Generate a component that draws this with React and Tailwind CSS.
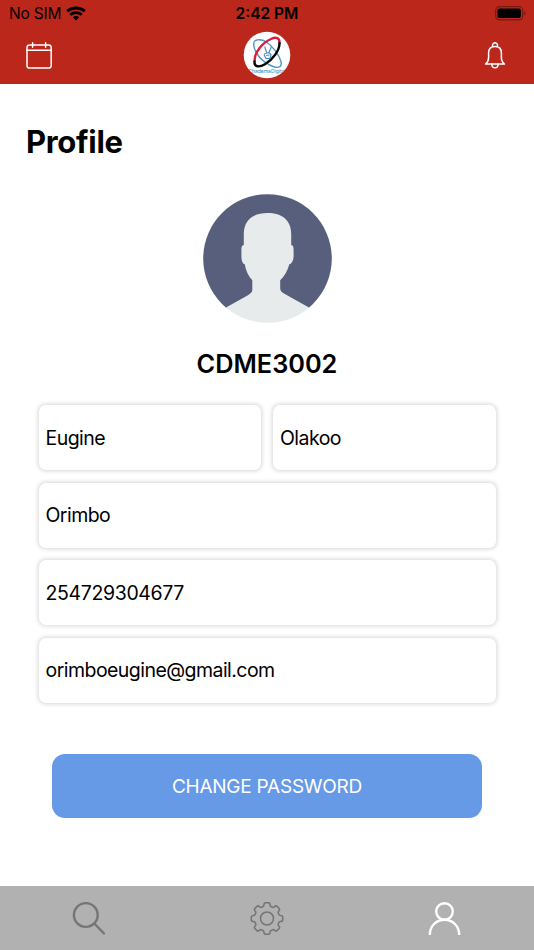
import { useState } from "react";

// Eight teeth, one every 45 degrees
const gearPath = (() => {
    const point = (x, y, angle) => {
        const px = x * Math.cos(angle) - y * Math.sin(angle);
        const py = x * Math.sin(angle) + y * Math.cos(angle);
        return `${px.toFixed(2)} ${py.toFixed(2)}`;
    };
    let d = "";
    for (let i = 0; i < 8; i++) {
        const a = (i * Math.PI) / 4;
        const p = (x, y) => point(x, y, a);
        d += `${i === 0 ? "M" : "L"}${p(-4.4, -11.7)} Q${p(-3.2, -12.1)} ${p(-3.1, -13.4)} Q${p(-3, -15.7)} ${p(-1.5, -15.7)} L${p(1.5, -15.7)} Q${p(3, -15.7)} ${p(3.1, -13.4)} Q${p(3.2, -12.1)} ${p(4.4, -11.7)} `;
    }
    return d + "Z";
})();

const WifiIcon = () => (
    <svg width="20" height="15" viewBox="0 0 20 15" className="-mt-px">
        <g fill="none" stroke="#000" strokeWidth="2.8">
            <path d="M1.2 5.3C6.1 .9 13.9 .9 18.8 5.3" />
            <path d="M4.3 8.7C7.5 5.9 12.5 5.9 15.7 8.7" />
        </g>
        <path d="M6.8 11.2C8.6 9.6 11.4 9.6 13.2 11.2L10 14.5Z" />
    </svg>
);

const BatteryIcon = () => (
    <svg width="32" height="15" viewBox="0 0 32 15" className="-mt-[2px]">
        <rect x=".7" y=".7" width="27" height="13.2" rx="3.8" fill="none" stroke="#761a12" strokeWidth="1.2" />
        <rect x="2.5" y="2.4" width="23.4" height="9.7" rx="2.2" />
        <path d="M29.2 5.2C31.2 5.8 31.2 8.8 29.2 9.4Z" fill="#761a12" />
    </svg>
);

const CalendarIcon = () => (
    <svg width="28" height="28" viewBox="0 0 28 28" fill="none" stroke="#fff" strokeWidth="1.5" strokeLinecap="round">
        <rect x="2" y="2.9" width="24.2" height="23.2" rx="2.6" />
        <path d="M2 8.2H26.2M7.6 .8V5.2M20.6 .8V5.2" />
    </svg>
);

const BellIcon = () => (
    <svg width="22" height="28" viewBox="0 0 22 28" fill="none" stroke="#fff" strokeWidth="1.5" strokeLinejoin="round" strokeLinecap="round">
        <path d="M9 4.6A2.4 2.4 0 1 1 13 4.6" />
        <path d="M1.5 22C3.6 20.5 4.6 18.5 4.6 15.5V11C4.6 7 7.1 4.5 11 4.5S17.4 7 17.4 11V15.5C17.4 18.5 18.4 20.5 20.5 22Z" />
        <path d="M7.8 22.2C8 26.9 14 26.9 14.2 22.2" />
    </svg>
);

const Logo = () => (
    <svg width="48" height="48" viewBox="0 0 48 48" className="-mt-px">
        <defs>
            <clipPath id="badge"><circle cx="24" cy="24" r="23.3" /></clipPath>
        </defs>
        <circle cx="24" cy="24" r="23.3" fill="#fff" />
        <g clipPath="url(#badge)" fill="none" strokeLinecap="round">
            <path d="M10.7 12.5C11 7.5 19 8 23.5 11C30 15.5 36 23.5 38 30.5C39 35 36.5 37.3 31.5 36C25 34.3 18 29 14.5 23.5C12 19.5 10.4 16 10.7 12.5Z" stroke="#4f98c8" strokeWidth="1.4" />
            <path d="M11.7 30C11 22 19.5 11.5 28 8C33 5.7 36.8 6.7 36.5 12" stroke="#d81e3d" strokeWidth="2.4" />
            <path d="M36.5 12C36.8 19.5 29.5 28.8 22 33.2C16 36.7 11 36.2 11.5 30.5" stroke="#080808" strokeWidth="2.4" />
            <path d="M21.8 16L23.5 21M28.4 15.5L26 21.5M21.5 23L25.5 21.5L28 23.5L27 27.5H23L21.2 24M23.5 24.5L26 24" stroke="#4c91bd" strokeWidth="1.2" strokeLinejoin="round" />
            <text x="24" y="41.7" textAnchor="middle" fontSize="5" fill="#2a83be" fontFamily="Inter, sans-serif">ChademaDigital</text>
        </g>
    </svg>
);

const Avatar = () => (
    <svg width="129" height="129" viewBox="0 0 129 129">
        <defs>
            <clipPath id="avatar"><circle cx="64.5" cy="64.5" r="64.3" /></clipPath>
        </defs>
        <g clipPath="url(#avatar)">
            <path d="M0 0H129V114H0Z" fill="#585f7c" />
            <path
                fill="#e7ebec"
                d="M64.5 19C50 19 40.8 26 40.8 40V51C38.7 51.5 38.4 53 38.4 56V62C38.4 66 39.5 70 41.8 70.3C42.8 77 45.5 82 49.3 86.3V96C49.3 98.5 47 100 44.5 101.4L23 113.5V129H106V113.5L84.5 101.4C80 99 77.2 98 77.2 94V86.3C81.5 82 84.5 77 86.3 70.3C88.8 70 90.6 66 90.6 62V56C90.6 53 90.2 51.5 88.2 51V40C88.2 26 79 19 64.5 19Z"
            />
        </g>
    </svg>
);

const SearchIcon = () => (
    <svg width="36" height="36" viewBox="0 0 36 36" fill="none" stroke="currentColor" strokeWidth="2.4" strokeLinecap="round">
        <circle cx="14.8" cy="15" r="11.9" />
        <path d="M23.3 23.5L33 33.5" />
    </svg>
);

const GearIcon = () => (
    <svg width="36" height="36" viewBox="-18 -18.5 36 36" fill="none" stroke="currentColor" strokeWidth="1.55" strokeLinejoin="round">
        <path d={gearPath} />
        <circle r="6.5" />
    </svg>
);

const PersonIcon = () => (
    <svg width="36" height="36" viewBox="0 0 36 36" fill="none" stroke="currentColor" strokeWidth="2.4">
        <circle cx="17.5" cy="11.5" r="8.3" />
        <path d="M2.8 35C2.8 26 9.3 19.8 17.5 19.8S32.2 26 32.2 35" />
    </svg>
);

const tabs = [
    { id: "search", icon: SearchIcon },
    { id: "settings", icon: GearIcon },
    { id: "profile", icon: PersonIcon },
];

const Field = ({ value, type = "text", wide }) => (
    <input
        type={type}
        defaultValue={value}
        className={`h-[65px] w-full min-w-0 rounded-[7px] bg-white px-[7px] text-[19.5px] text-black outline-none shadow-[0_0_4px_0.5px_rgba(0,0,0,0.16)] ${type === "tel" ? "tracking-[-0.36px]" : "tracking-[-0.54px]"} ${wide ? "col-span-2" : ""}`}
    />
);

export default function App() {
    const [activeTab, setActiveTab] = useState("profile");

    return (
        <div className="flex h-[950px] w-[534px] flex-col overflow-hidden bg-white font-['Inter',sans-serif] text-black">
            <header className="h-[84px] shrink-0 bg-[#bb271a]">
                <div className="grid h-7 grid-cols-3 items-center px-[7px]">
                    <div className="flex items-center gap-[5px] pl-[2px] text-[15.5px] tracking-[-0.2px]">
                        <span>No SIM</span>
                        <WifiIcon />
                    </div>
                    <span className="text-center text-[15.5px] font-semibold">2:42 PM</span>
                    <div className="flex justify-end"><BatteryIcon /></div>
                </div>
                <div className="grid h-[55px] grid-cols-3 items-center px-[25px]">
                    <button><CalendarIcon /></button>
                    <div className="flex justify-center"><Logo /></div>
                    <button className="flex justify-end pr-[3px]"><BellIcon /></button>
                </div>
            </header>

            <main className="flex flex-1 flex-col items-center">
                <h1 className="mt-[38px] self-start pl-[26px] text-[31px] leading-10 font-bold tracking-[-0.3px]">Profile</h1>
                <div className="mt-[31.5px]"><Avatar /></div>
                <h2 className="mt-[25.5px] text-[25.3px] leading-8 font-semibold">CDME3002</h2>

                <form className="mt-[25.4px] grid w-[457px] grid-cols-2 gap-x-3 gap-y-[12.4px]">
                    <Field value="Eugine" />
                    <Field value="Olakoo" />
                    <Field value="Orimbo" wide />
                    <Field value="254729304677" type="tel" wide />
                    <Field value="orimboeugine@gmail.com" type="email" wide />
                </form>

                <button className="mt-[51.4px] h-16 w-[430px] rounded-[13px] bg-[#6699e6] pt-[2px] text-[19px] tracking-[-0.24px] text-white">
                    CHANGE PASSWORD
                </button>
            </main>

            <nav className="grid h-16 shrink-0 grid-cols-3 bg-[#b1b1b1]">
                {tabs.map(({ id, icon: Icon }) => (
                    <button
                        key={id}
                        onClick={() => setActiveTab(id)}
                        className={`flex items-center justify-center ${activeTab === id ? "text-white" : "text-[#757575]"}`}
                    >
                        <Icon />
                    </button>
                ))}
            </nav>
        </div>
    );
}
